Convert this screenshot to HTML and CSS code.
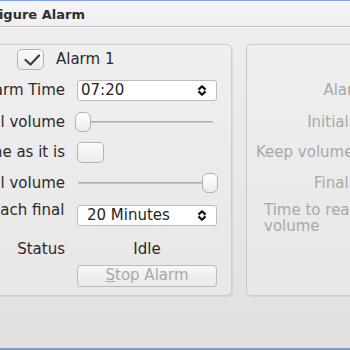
FILE: index.html
```html
<!DOCTYPE html>
<html>
<head>
<meta charset="utf-8">
<link rel="stylesheet" href="styles.css">
</head>
<body>
<div class="window">
  <div class="titlebar"><span class="title">Configure Alarm</span></div>
  <div class="content">
    <section class="group group-left">
      <div class="form">
        <label class="check-row">
          <span class="checkbox"><svg width="27" height="21" viewBox="0 0 27 21"><path d="M8.5 11 L13.5 15.5 L22 6.5" fill="none" stroke="#3c3c3c" stroke-width="2.2" stroke-linecap="round" stroke-linejoin="round"/></svg></span>
          <span class="check-text">Alarm 1</span>
        </label>
        <div class="lbl">Alarm Time</div>
        <div class="field"><div class="spin spin-time"><span>07:20</span><svg class="arrows" width="10" height="11" viewBox="0 0 10 11"><path d="M1.5 4.6 L5 1.3 L8.5 4.6 M1.5 6.4 L5 9.7 L8.5 6.4" fill="none" stroke="#111" stroke-width="2.2" stroke-linejoin="round"/></svg></div></div>
        <div class="lbl">Initial volume</div>
        <div class="field"><div class="slider"><div class="track"></div><div class="thumb" style="left:-2px"></div></div></div>
        <div class="lbl">Keep volume same as it is</div>
        <div class="field"><span class="checkbox"></span></div>
        <div class="lbl">Final volume</div>
        <div class="field"><div class="slider"><div class="track"></div><div class="thumb" style="left:125px"></div></div></div>
        <div class="lbl lbl-wrap">Time to reach final volume</div>
        <div class="field"><div class="spin spin-min"><span>20 Minutes</span><svg class="arrows" width="10" height="11" viewBox="0 0 10 11"><path d="M1.5 4.6 L5 1.3 L8.5 4.6 M1.5 6.4 L5 9.7 L8.5 6.4" fill="none" stroke="#111" stroke-width="2.2" stroke-linejoin="round"/></svg></div></div>
        <div class="lbl">Status</div>
        <div class="field status">Idle</div>
        <div class="spacer"></div>
        <div class="field"><button class="btn" disabled><u>S</u>top Alarm</button></div>
      </div>
    </section>
    <section class="group group-right">
      <div class="form">
        <label class="check-row">
          <span class="checkbox"></span>
          <span class="check-text">Alarm 2</span>
        </label>
        <div class="lbl">Alarm Time</div>
        <div class="field"><div class="spin spin-time"><span>07:20</span></div></div>
        <div class="lbl">Initial volume</div>
        <div class="field"><div class="slider"><div class="track"></div><div class="thumb" style="left:-2px"></div></div></div>
        <div class="lbl lbl-left">Keep volume same as it is</div>
        <div class="field"><span class="checkbox"></span></div>
        <div class="lbl">Final volume</div>
        <div class="field"><div class="slider"><div class="track"></div><div class="thumb" style="left:125px"></div></div></div>
        <div class="lbl lbl-wrap">Time to reach final volume</div>
        <div class="field"><div class="spin spin-min"><span>20 Minutes</span></div></div>
        <div class="lbl">Status</div>
        <div class="field status">Idle</div>
        <div class="spacer"></div>
        <div class="field"><button class="btn" disabled><u>S</u>top Alarm</button></div>
      </div>
    </section>
  </div>
</div>
</body>
</html>
```

FILE: styles.css
```css
html, body {
  margin: 0;
  padding: 0;
}
body {
  width: 350px;
  height: 350px;
  overflow: hidden;
  font-family: "DejaVu Sans", sans-serif;
  font-size: 15px;
  color: #2b2b2b;
}
.window {
  width: 350px;
  height: 350px;
  box-sizing: border-box;
  display: flex;
  flex-direction: column;
  overflow: hidden;
  border-bottom: 2px solid #7f9dcc;
  background: linear-gradient(#efefef, #e0e0e0);
}
.titlebar {
  flex: none;
  height: 25px;
  border-top: 1px solid #86a3d3;
  border-bottom: 1px solid #c4c4c4;
  background: linear-gradient(#f6f6f6, #efefef);
  box-sizing: content-box;
  white-space: nowrap;
}
.title {
  display: block;
  padding-top: 3px;
  line-height: 22px;
  font-size: 13px;
  font-weight: bold;
  color: #2f2f2f;
  text-indent: -34px;
}
.content {
  flex: 1;
  display: flex;
  align-items: flex-start;
  gap: 14px;
  padding-top: 17px;
  border-top: 1px solid #f7f7f7;
}
.group {
  flex: none;
  box-sizing: border-box;
  border: 1px solid #cdcdcd;
  border-radius: 5px;
  background: linear-gradient(#efefef, #e7e7e7);
  box-shadow: 1px 1px 0 rgba(0,0,0,0.06);
  padding-bottom: 8px;
  margin-top: -1px;
}
.group-left {
  margin-left: -90px;
  width: 322px;
  padding-left: 9px;
  padding-right: 14px;
}
.group-right {
  width: 340px;
  padding-left: 17px;
  border-left-color: #c6c6c6;
}
.form {
  display: grid;
  grid-template-columns: 145px 140px;
  column-gap: 12px;
  grid-template-rows: 28px 35px 28px 33px 28px 37px 30px 23px;
  line-height: 17px;
}
.check-row {
  grid-column: 1 / span 2;
  display: flex;
  align-items: center;
  gap: 12px;
  padding-left: 97px;
}
.lbl {
  display: flex;
  justify-content: flex-end;
  align-items: center;
  white-space: nowrap;
}
.lbl-left {
  justify-content: flex-start;
  margin-left: -8px;
}
.lbl-wrap {
  display: block;
  white-space: normal;
  text-align: left;
  line-height: 16px;
  align-self: center;
  padding-top: 5px;
}
.group-left .lbl-wrap {
  margin-left: 4px;
  margin-right: -4px;
}
.field {
  display: flex;
  align-items: center;
}
.status {
  justify-content: center;
}
.checkbox {
  flex: none;
  display: block;
  width: 27px;
  height: 21px;
  box-sizing: border-box;
  border: 1px solid #b3b3b3;
  border-radius: 5px;
  background: linear-gradient(#fbfbfb, #ececec);
  box-shadow: inset 0 1px 0 #fff;
}
.checkbox svg {
  display: block;
  margin: -1px;
}
.spin {
  width: 140px;
  height: 21px;
  box-sizing: border-box;
  border: 1px solid #bcbcbc;
  border-radius: 3px;
  background: #fff;
  display: flex;
  align-items: center;
  justify-content: space-between;
  padding-right: 9px;
  color: #252525;
  white-space: nowrap;
}
.spin-time {
  padding-left: 3px;
}
.spin-min {
  padding-left: 9px;
}
.arrows {
  flex: none;
  display: block;
}
.slider {
  position: relative;
  width: 140px;
  height: 20px;
}
.track {
  position: absolute;
  left: 1px;
  right: 4px;
  top: 9px;
  height: 2px;
  background: linear-gradient(#a3a3a3, #cfcfcf);
  border-radius: 1px;
}
.thumb {
  position: absolute;
  top: 0;
  width: 16px;
  height: 20px;
  box-sizing: border-box;
  border: 1px solid #b2b2b2;
  border-radius: 6px;
  background: linear-gradient(#ffffff, #ececec);
}
.spacer {
  display: block;
}
.btn {
  width: 140px;
  height: 22px;
  box-sizing: border-box;
  border: 1px solid #bcbcbc;
  border-radius: 4px;
  background: linear-gradient(#f6f6f6, #e9e9e9);
  font-family: "DejaVu Sans", sans-serif;
  font-size: 15px;
  line-height: 17px;
  color: #a9a9a9;
  padding: 0;
}
.btn u {
  text-decoration-thickness: 1px;
}
.group-right .lbl,
.group-right .check-text,
.group-right .status {
  color: #a8a8a8;
}
```
